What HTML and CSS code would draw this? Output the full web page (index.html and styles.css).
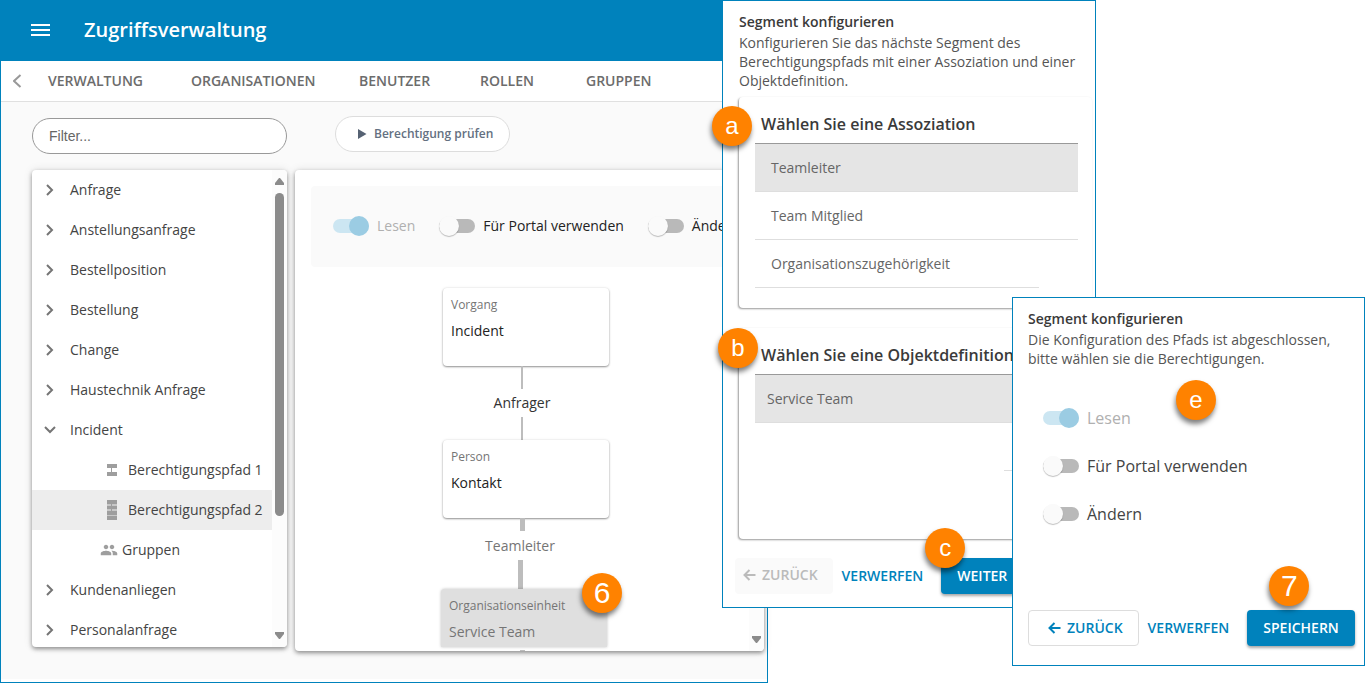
FILE: index.html
```html
<!DOCTYPE html>
<html lang="de">
<head>
<meta charset="utf-8">
<meta name="viewport" content="width=device-width, initial-scale=1">
<title>Zugriffsverwaltung</title>
<link rel="stylesheet" href="styles.css">
</head>
<body>
<div class="scene">
  <main class="app">
    <header class="app-bar">
      <button class="icon-button" type="button" aria-label="Menü">
        <svg width="20" height="12" viewBox="0 0 20 12"><path d="M0 0h19v2H0zM0 5h19v2H0zM0 10h19v2H0z" fill="#fff"/></svg>
      </button>
      <h1 class="app-title">Zugriffsverwaltung</h1>
    </header>
    <nav class="tabs">
      <button class="icon-button back" type="button" aria-label="Zurückblättern">
        <svg width="10" height="14" viewBox="0 0 10 14"><path d="M7.500 1L1 7l6.500 6" fill="none" stroke="#999" stroke-width="2"/></svg>
      </button>
      <a class="tab" href="#verwaltung">VERWALTUNG</a>
      <a class="tab" href="#organisationen">ORGANISATIONEN</a>
      <a class="tab" href="#benutzer">BENUTZER</a>
      <a class="tab" href="#rollen">ROLLEN</a>
      <a class="tab" href="#gruppen">GRUPPEN</a>
    </nav>
    <div class="workspace">
      <section class="sidebar">
        <input class="filter" type="text" placeholder="Filter..." aria-label="Filter">
        <div class="panel tree-panel">
          <ul class="tree">
            <li><button class="tree-row" type="button"><svg class="chevron" viewBox="0 0 12 12"><path d="M3 1l5 5-5 5"/></svg>Anfrage</button></li>
            <li><button class="tree-row" type="button"><svg class="chevron" viewBox="0 0 12 12"><path d="M3 1l5 5-5 5"/></svg>Anstellungsanfrage</button></li>
            <li><button class="tree-row" type="button"><svg class="chevron" viewBox="0 0 12 12"><path d="M3 1l5 5-5 5"/></svg>Bestellposition</button></li>
            <li><button class="tree-row" type="button"><svg class="chevron" viewBox="0 0 12 12"><path d="M3 1l5 5-5 5"/></svg>Bestellung</button></li>
            <li><button class="tree-row" type="button"><svg class="chevron" viewBox="0 0 12 12"><path d="M3 1l5 5-5 5"/></svg>Change</button></li>
            <li><button class="tree-row" type="button"><svg class="chevron" viewBox="0 0 12 12"><path d="M3 1l5 5-5 5"/></svg>Haustechnik Anfrage</button></li>
            <li><button class="tree-row" type="button" aria-expanded="true"><svg class="chevron" viewBox="0 0 12 12"><path d="M1 3l5 5 5-5"/></svg>Incident</button></li>
            <li><button class="tree-row path" type="button"><svg width="12" height="20" viewBox="0 0 12 20" fill="#9e9e9e"><path d="M1 4h10v4H1zM5 8h1v4H5zM1 12h10v4H1z"/></svg>Berechtigungspfad 1</button></li>
            <li><button class="tree-row path selected" type="button"><svg width="12" height="20" viewBox="0 0 12 20" fill="#9e9e9e"><path d="M1 0h10v4H1zM1 6h10v3H1zM1 11h10v4H1zM1 16h10v4H1z"/><path d="M1 4h10v2H1zM1 9h10v2H1zM1 15h10v1H1z" fill="#c8c8c8"/><path d="M5 4h1v2H5zM5 9h1v2H5z"/></svg>Berechtigungspfad 2</button></li>
            <li><button class="tree-row group" type="button"><svg width="18" height="18" viewBox="0 0 24 24" fill="#9e9e9e"><path d="M16 11c1.660 0 2.990-1.340 2.990-3S17.660 5 16 5s-3 1.340-3 3 1.340 3 3 3zm-8 0c1.660 0 2.990-1.340 2.990-3S9.660 5 8 5 5 6.340 5 8s1.340 3 3 3zm0 2c-2.330 0-7 1.170-7 3.500V19h14v-2.500C15 14.170 10.330 13 8 13zm8 0c-.29 0-.62.02-.97.05 1.160.84 1.970 1.970 1.970 3.450V19h6v-2.500c0-2.330-4.670-3.500-7-3.500z"/></svg>Gruppen</button></li>
            <li><button class="tree-row" type="button"><svg class="chevron" viewBox="0 0 12 12"><path d="M3 1l5 5-5 5"/></svg>Kundenanliegen</button></li>
            <li><button class="tree-row" type="button"><svg class="chevron" viewBox="0 0 12 12"><path d="M3 1l5 5-5 5"/></svg>Personalanfrage</button></li>
          </ul>
          <div class="scrollbar" aria-hidden="true">
            <svg width="9" height="7" viewBox="0 0 9 7"><path d="M4 0h1l4 5v2H0V5z" fill="#8b8b8b"/></svg>
            <div class="thumb"></div>
            <svg class="down" width="9" height="7" viewBox="0 0 9 7"><path d="M4 7h1l4-5V0H0v2z" fill="#8b8b8b"/></svg>
          </div>
        </div>
      </section>
      <section class="editor">
        <button class="check-button" type="button"><svg width="10" height="12" viewBox="0 0 10 12"><path d="M1 1l8.500 5L1 11z" fill="#566273"/></svg>Berechtigung prüfen</button>
        <div class="panel chart-panel">
          <div class="chart-body">
            <div class="rights">
              <label class="toggle disabled"><input type="checkbox" checked disabled>Lesen</label>
              <label class="toggle"><input type="checkbox">Für Portal verwenden</label>
              <label class="toggle"><input type="checkbox">Ändern</label>
            </div>
            <div class="chart">
              <div class="node"><span class="node-kind">Vorgang</span><span class="node-name">Incident</span></div>
              <div class="link thin"></div>
              <div class="link-label">Anfrager</div>
              <div class="link thin"></div>
              <div class="node"><span class="node-kind">Person</span><span class="node-name">Kontakt</span></div>
              <div class="link thick short"></div>
              <div class="link-label muted">Teamleiter</div>
              <div class="link thick long"></div>
              <div class="node current"><span class="node-kind">Organisationseinheit</span><span class="node-name">Service Team</span><span class="badge digit badge-6">6</span></div>
              <div class="link thick after"></div>
            </div>
          </div>
          <div class="scrollbar" aria-hidden="true">
            <svg class="down" width="9" height="7" viewBox="0 0 9 7"><path d="M4 7h1l4-5V0H0v2z" fill="#8b8b8b"/></svg>
          </div>
        </div>
      </section>
    </div>
  </main>

  <section class="dialog dialog-choose" aria-labelledby="choose-title">
    <div class="dialog-text">
      <h2 id="choose-title">Segment konfigurieren</h2>
      <p>Konfigurieren Sie das nächste Segment des Berechtigungspfads mit einer Assoziation und einer Objektdefinition.</p>
    </div>
    <div class="card">
      <h3>Wählen Sie eine Assoziation</h3>
      <ul class="options">
        <li class="chosen"><button type="button">Teamleiter</button></li>
        <li><button type="button">Team Mitglied</button></li>
        <li class="last"><button type="button">Organisationszugehörigkeit</button></li>
      </ul>
      <span class="badge badge-a">a</span>
    </div>
    <div class="card">
      <h3>Wählen Sie eine Objektdefinition</h3>
      <ul class="options compact">
        <li class="chosen"><button type="button">Service Team</button></li>
        <li class="rest"></li>
      </ul>
      <span class="badge badge-b">b</span>
    </div>
    <footer class="actions">
      <button class="btn back-btn" type="button" disabled><svg width="13" height="12" viewBox="0 0 13 12"><path d="M12.500 6H1.500M6.500 1l-5 5 5 5"/></svg>ZURÜCK</button>
      <button class="btn text-btn" type="button">VERWERFEN</button>
      <button class="btn primary" type="button">WEITER<span class="badge badge-c">c</span></button>
    </footer>
  </section>

  <section class="dialog dialog-rights" aria-labelledby="rights-title">
    <div class="dialog-text">
      <h2 id="rights-title">Segment konfigurieren</h2>
      <p>Die Konfiguration des Pfads ist abgeschlossen, bitte wählen sie die Berechtigungen.</p>
    </div>
    <div class="toggle-list">
      <label class="toggle large disabled"><input type="checkbox" checked disabled>Lesen</label>
      <label class="toggle large"><input type="checkbox">Für Portal verwenden</label>
      <label class="toggle large"><input type="checkbox">Ändern</label>
      <span class="badge badge-e">e</span>
    </div>
    <footer class="actions">
      <button class="btn back-btn" type="button"><svg width="13" height="12" viewBox="0 0 13 12"><path d="M12.500 6H1.500M6.500 1l-5 5 5 5"/></svg>ZURÜCK</button>
      <button class="btn text-btn" type="button">VERWERFEN</button>
      <button class="btn primary" type="button">SPEICHERN<span class="badge digit badge-7">7</span></button>
    </footer>
  </section>
</div>
</body>
</html>
```

FILE: styles.css
```css
:root {
  --blue: #0082bc;
  --ink: #444;
  --line: #dedede;
}

* { box-sizing: border-box; }

body {
  margin: 0;
  background: #fff;
  font-family: "Open Sans", "Noto Sans", sans-serif;
  font-size: 14px;
  line-height: 18px;
  color: var(--ink);
  overflow: hidden;
}

h1, h2, h3, p, ul { margin: 0; padding: 0; }
ul { list-style: none; }
button, input { font: inherit; color: inherit; margin: 0; }
button { border: 0; padding: 0; background: none; cursor: pointer; }
svg { display: block; flex: none; }

/* Overlapping windows share grid columns */
.scene {
  display: grid;
  grid-template-columns:
    minmax(0, 722fr) minmax(0, 46fr) minmax(0, 244fr)
    minmax(0, 84fr) minmax(0, 269fr);
  grid-template-rows: 100vh;
  align-items: start;
}

.app {
  grid-column: 1 / 3;
  grid-row: 1;
  height: 100vh;
  display: flex;
  flex-direction: column;
  border: 1px solid var(--blue);
  padding-bottom: 3px;
}

.app-bar {
  flex: none;
  height: 60px;
  display: flex;
  align-items: center;
  gap: 33px;
  padding: 0 30px 3px;
  background: var(--blue);
  color: #fff;
}
.app-title { font-size: 20px; line-height: 28px; font-weight: 600; }

.tabs {
  flex: none;
  height: 41px;
  display: grid;
  grid-template-columns: 35px 143px 168px 121px 106px auto;
  align-items: center;
  padding-left: 12px;
  border-bottom: 1px solid #e0e0e0;
}
.tab {
  color: #6c6c6c;
  font-weight: 600;
  text-decoration: none;
}

.workspace {
  flex: 1;
  min-height: 0;
  display: flex;
  gap: 8px;
  background: #fafafa;
  padding: 0 3px 28px 31px;
}
.sidebar, .editor {
  display: flex;
  flex-direction: column;
  align-items: stretch;
  min-width: 0;
}
.sidebar { flex: none; width: 255px; gap: 16px; padding: 16px 0 4px; }
.editor { flex: 1; gap: 18px; padding-top: 14px; }

.filter {
  flex: none;
  height: 36px;
  border: 1px solid #999;
  border-radius: 18px;
  padding: 0 16px;
  background: #fff;
  font-family: "Liberation Sans", Arial, sans-serif;
}
.filter::placeholder { color: #666; opacity: 1; }

.check-button {
  flex: none;
  align-self: flex-start;
  height: 36px;
  display: flex;
  align-items: center;
  gap: 7px;
  margin-left: 40px;
  padding: 0 16px 1px 21px;
  border: 1px solid #ddd;
  border-radius: 18px;
  background: #fff;
  color: #647081;
  font-size: 12px;
  font-weight: 600;
}

.panel {
  flex: 1;
  min-height: 0;
  display: flex;
  overflow: hidden;
  background: #fff;
  border-radius: 4px;
  box-shadow: 0 2px 4px rgba(0, 0, 0, .4), 0 0 10px rgba(0, 0, 0, .1);
}

.scrollbar {
  flex: none;
  width: 15px;
  display: flex;
  flex-direction: column;
  align-items: center;
  gap: 8px;
  padding: 8px 0;
  background: #fcfcfc;
}
.thumb { width: 9px; height: 70%; border-radius: 5px; background: #8b8b8b; }
.down { margin-top: auto; }

.tree { flex: 1; min-width: 0; overflow: hidden; }
.tree-row {
  width: 100%;
  height: 40px;
  display: flex;
  align-items: center;
  gap: 14px;
  padding-left: 12px;
  text-align: left;
  white-space: nowrap;
}
.tree-row.path { gap: 10px; padding-left: 74px; }
.tree-row.group { gap: 4px; padding-left: 68px; }
.tree-row.selected { background: #ededed; }
.chevron { width: 12px; height: 12px; fill: none; stroke: #757575; stroke-width: 2; }

.chart-body { flex: 1; min-width: 0; overflow: hidden; padding: 16px 0 0 16px; }
.rights {
  height: 81px;
  display: flex;
  align-items: center;
  gap: 24px;
  padding: 0 0 1px 22px;
  border-radius: 4px;
  background: #fafafa;
  white-space: nowrap;
}

.toggle { display: flex; align-items: center; gap: 8px; color: #222; }
.toggle.large { height: 48px; font-size: 16px; line-height: 22px; color: var(--ink); }
.toggle.disabled { color: #b0b0b0; }
.toggle input {
  appearance: none;
  flex: none;
  position: relative;
  width: 36px;
  height: 20px;
}
.toggle input::before {
  content: "";
  display: block;
  height: 14px;
  margin-top: 3px;
  border-radius: 7px;
  background: #b9b9b9;
}
.toggle input::after {
  content: "";
  position: absolute;
  top: 0;
  left: 0;
  width: 20px;
  height: 20px;
  border-radius: 50%;
  background: #fafafa;
  box-shadow: 0 1px 1px rgba(0, 0, 0, .25);
}
.toggle input:checked::before { background: #cce6f2; }
.toggle input:checked::after { left: auto; right: 0; background: #9bcce3; box-shadow: none; }

.chart {
  display: flex;
  flex-direction: column;
  align-items: center;
  padding: 21px 16px 0 0;
}
.node {
  flex: none;
  width: 166px;
  height: 78px;
  display: flex;
  flex-direction: column;
  gap: 8px;
  margin-left: 8px;
  padding: 8px;
  border-radius: 4px;
  background: #fff;
  box-shadow: 0 1px 2px rgba(0, 0, 0, .4), 0 0 3px rgba(0, 0, 0, .1);
}
.node-kind { font-size: 12px; color: #757575; }
.node-name { color: #222; }
.node.current {
  position: relative;
  height: 58px;
  margin-left: 4px;
  border-radius: 4px 4px 0 0;
  background: #dfdfdf;
  box-shadow: 0 0 3px rgba(0, 0, 0, .25);
}
.node.current .node-name { color: #757575; }
.link { flex: none; background: #bdbdbd; }
.link.thin { width: 2px; height: 23px; }
.link.thick { width: 5px; }
.link.thick.short { height: 13px; }
.link.thick.long { height: 29px; margin-right: 4px; }
.link.thick.after { height: 12px; margin-top: 3px; }
.link-label { line-height: 28px; color: #333; }
.link-label.muted { padding-top: 1px; margin-right: 4px; color: #757575; }

.dialog {
  position: relative;
  grid-row: 1;
  display: flex;
  flex-direction: column;
  border: 1px solid var(--blue);
  background: #fff;
}
.dialog-choose { grid-column: 2 / 5; padding: 10px 0 13px; }
.dialog-rights { grid-column: 4 / 6; margin-top: 297px; padding: 10px 0 19px; }
.dialog-text { padding: 0 12px 0 16px; }
.dialog-rights .dialog-text { padding: 0 16px 0 15px; }
.dialog h2 { font-size: 14px; line-height: 22px; font-weight: 600; color: #3a3a3a; }
.dialog p { line-height: 19px; color: #555; }

.card {
  position: relative;
  min-height: 211px;
  margin: 20px 3px 0 16px;
  padding: 16px 14px 0 16px;
  border-radius: 4px;
  box-shadow: -1px 1px 2px rgba(0, 0, 0, .4);
}
.dialog-text + .card { margin-top: 7px; }
.card h3 {
  margin-bottom: 8px;
  padding-left: 6px;
  font-size: 16px;
  line-height: 22px;
  font-weight: 600;
  color: #3a3a3a;
  white-space: nowrap;
}
.options { border-top: 1px solid #999; }
.options li { height: 48px; border-bottom: 1px solid var(--line); }
.options button {
  width: 100%;
  height: 100%;
  padding: 0 16px;
  text-align: left;
  color: #666;
}
.options.compact button { padding: 0 12px; }
.options .chosen { background: #e5e5e5; }
.options .last { margin-right: 39px; }
.options .rest { margin-left: 249px; }

.actions { display: flex; gap: 9px; padding: 0 10px 0 12px; }
.dialog-choose .actions { margin-top: 19px; }
.dialog-rights .actions { margin-top: 72px; padding-left: 15px; }
.btn {
  position: relative;
  height: 36px;
  display: flex;
  align-items: center;
  border-radius: 4px;
  color: var(--blue);
  font-weight: 600;
}
.back-btn { gap: 6px; padding: 0 15px 0 19px; border: 1px solid #ddd; }
.back-btn svg { fill: none; stroke: currentColor; stroke-width: 2; }
.back-btn:disabled { padding: 0 15px 2px 8px; border: 0; background: #fafafa; color: #bbb; }
.text-btn { padding-right: 9px; }
.primary {
  padding: 0 16px;
  background: var(--blue);
  color: #fff;
  box-shadow: 0 2px 3px rgba(0, 0, 0, .35);
}

.toggle-list { position: relative; margin-top: 26px; padding-left: 30px; }

/* Numbered callouts over the windows */
.badge {
  position: absolute;
  width: 40px;
  height: 40px;
  border-radius: 50%;
  background: #ff8200;
  color: #fff;
  font-family: "Liberation Sans", Arial, sans-serif;
  font-size: 24px;
  font-weight: 400;
  line-height: 40px;
  text-align: center;
  box-shadow: -1px 4px 5px rgba(0, 0, 0, .5);
}
.badge.digit { font-size: 30px; }
.badge-6 { left: 141px; top: -16px; }
.badge-a { left: -27px; top: 9px; }
.badge-b { left: -21px; top: 0; }
.badge-c { left: -16px; top: -30px; }
.badge-e { left: 163px; top: -14px; }
.badge-7 { left: 22px; top: -44px; }
```
